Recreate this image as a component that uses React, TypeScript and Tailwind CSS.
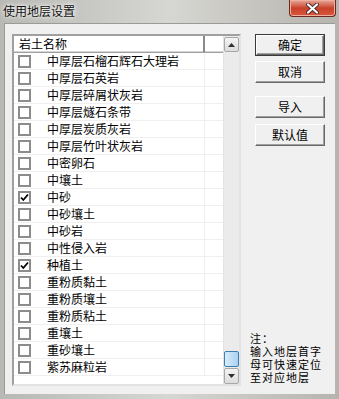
import React from "react";

interface Layer {
  name: string;
  checked?: boolean;
}

const layers: Layer[] = [
  { name: "中厚层石榴石辉石大理岩" },
  { name: "中厚层石英岩" },
  { name: "中厚层碎屑状灰岩" },
  { name: "中厚层燧石条带" },
  { name: "中厚层炭质灰岩" },
  { name: "中厚层竹叶状灰岩" },
  { name: "中密卵石" },
  { name: "中壤土" },
  { name: "中砂", checked: true },
  { name: "中砂壤土" },
  { name: "中砂岩" },
  { name: "中性侵入岩" },
  { name: "种植土", checked: true },
  { name: "重粉质黏土" },
  { name: "重粉质壤土" },
  { name: "重粉质粘土" },
  { name: "重壤土" },
  { name: "重砂壤土" },
  { name: "紫苏麻粒岩" },
];

const font = "font-['Noto_Sans_CJK_SC','Noto_Sans',sans-serif]";

// 经典复选框
function CheckBox({ checked }: { checked?: boolean }) {
  return (
    <div className="flex h-[13px] w-[13px] items-center justify-center border-2 border-[#8c8c8c] bg-white">
      {checked && (
        <svg width="9" height="9" viewBox="0 0 9 9">
          <path d="M1 4.5 L3.3 7 L8 1.5" fill="none" stroke="#000" strokeWidth="1.8" />
        </svg>
      )}
    </div>
  );
}

function Button({ label, primary }: { label: string; primary?: boolean }) {
  return (
    <div
      className={`h-[22px] w-[70px] ${
        primary ? "border border-[#3a3a3a]" : ""
      }`}
    >
      <div className="flex h-full w-full items-center justify-center border border-t-white border-l-white border-r-[#696969] border-b-[#696969] bg-[#f0f0f0] text-[12px] leading-none text-black shadow-[inset_-1px_-1px_0_#a0a0a0]">
        {label}
      </div>
    </div>
  );
}

function ScrollBar() {
  return (
    <div className="flex w-[16px] flex-col border-l border-[#e3e3e3] bg-[#ebebeb]">
      <div className="mt-[1px] flex h-[15px] items-center justify-center rounded-[2px] border border-[#a8a8a8] bg-gradient-to-b from-[#f4f4f4] to-[#dcdcdc]">
        <svg width="7" height="4" viewBox="0 0 7 4">
          <path d="M0 4 L3.5 0 L7 4 Z" fill="#303030" />
        </svg>
      </div>
      <div className="flex-1" />
      <div className="h-[16px] rounded-[2px] border border-[#3c7fb1] bg-gradient-to-r from-[#d9ecfb] to-[#a9d2f5]" />
      <div className="mt-[1px] flex h-[16px] items-center justify-center rounded-[2px] border border-[#a8a8a8] bg-gradient-to-b from-[#f4f4f4] to-[#dcdcdc]">
        <svg width="7" height="4" viewBox="0 0 7 4">
          <path d="M0 0 L3.5 4 L7 0 Z" fill="#303030" />
        </svg>
      </div>
    </div>
  );
}

export default function App() {
  return (
    <div
      className={`flex h-[399px] w-[339px] flex-col bg-gradient-to-r from-[#b8b8b4] via-[#d6d6d2] to-[#b6b4ae] ${font}`}
    >
      {/* 标题栏 */}
      <div className="flex h-[23px] items-start justify-between">
        <div className="pl-[3px] pt-[3px] text-[12px] leading-[15px] text-[#111] [text-shadow:0_0_6px_#fff,0_0_3px_#fff]">
          使用地层设置
        </div>
        <div className="mr-[3px] flex h-[17px] w-[47px] items-center justify-center rounded-b-[4px] border border-t-0 border-[#6a2a20] bg-gradient-to-b from-[#e8a89a] via-[#c8412a] to-[#d8583c] shadow-[inset_0_0_0_1px_#f0b0a0]">
          <svg width="13" height="11" viewBox="0 0 13 11">
            <path
              d="M2 1.5 L11 9.5 M11 1.5 L2 9.5"
              stroke="#4a2a2a"
              strokeWidth="4"
              strokeLinecap="round"
            />
            <path d="M2 1.5 L11 9.5 M11 1.5 L2 9.5" stroke="#fff" strokeWidth="2.2" strokeLinecap="round" />
          </svg>
        </div>
      </div>

      {/* 客户区 */}
      <div className="mx-[4px] mb-[5px] flex flex-1 border-l border-t border-[#9a9a9a] bg-[#f0f0f0] pl-[7px] pt-[10px]">
        {/* 列表 */}
        <div className="flex h-[352px] w-[229px] border-2 border-t-[#a0a0a0] border-l-[#a0a0a0] border-r-[#e3e3e3] border-b-[#e3e3e3] bg-white">
          <div className="flex flex-1 flex-col">
            <div className="flex h-[17px] border-b border-[#a0a0a0] shadow-[inset_0_-1px_0_#d5d5d5]">
              <div className="w-[191px] border-r-2 border-[#8a8a8a] pl-[5px] text-[12px] leading-[16px] text-black">
                岩土名称
              </div>
              <div className="flex-1" />
            </div>
            {layers.map((l, i) => (
              <div key={i} className="flex h-[17px] border-b border-[#efefef]">
                <div className="flex w-[191px] items-center border-r border-[#efefef]">
                  <div className="ml-[4px]">
                    <CheckBox checked={l.checked} />
                  </div>
                  <span className="ml-[16px] text-[12px] leading-none text-black">{l.name}</span>
                </div>
                <div className="flex-1" />
              </div>
            ))}
          </div>
          <ScrollBar />
        </div>

        {/* 右侧按钮 */}
        <div className="ml-[9px] flex h-[352px] w-[76px] flex-col">
          <div className="ml-[5px] flex flex-col">
            <Button label="确定" primary />
            <div className="mt-[5px]">
              <Button label="取消" />
            </div>
            <div className="mt-[13px]">
              <Button label="导入" />
            </div>
            <div className="mt-[6px]">
              <Button label="默认值" />
            </div>
          </div>
          <div className="mt-auto pb-[2px] text-[11px] leading-[13px] tracking-[1px] text-black">
            <div>注：</div>
            <div>输入地层首字</div>
            <div>母可快速定位</div>
            <div>至对应地层</div>
          </div>
        </div>
      </div>
    </div>
  );
}
